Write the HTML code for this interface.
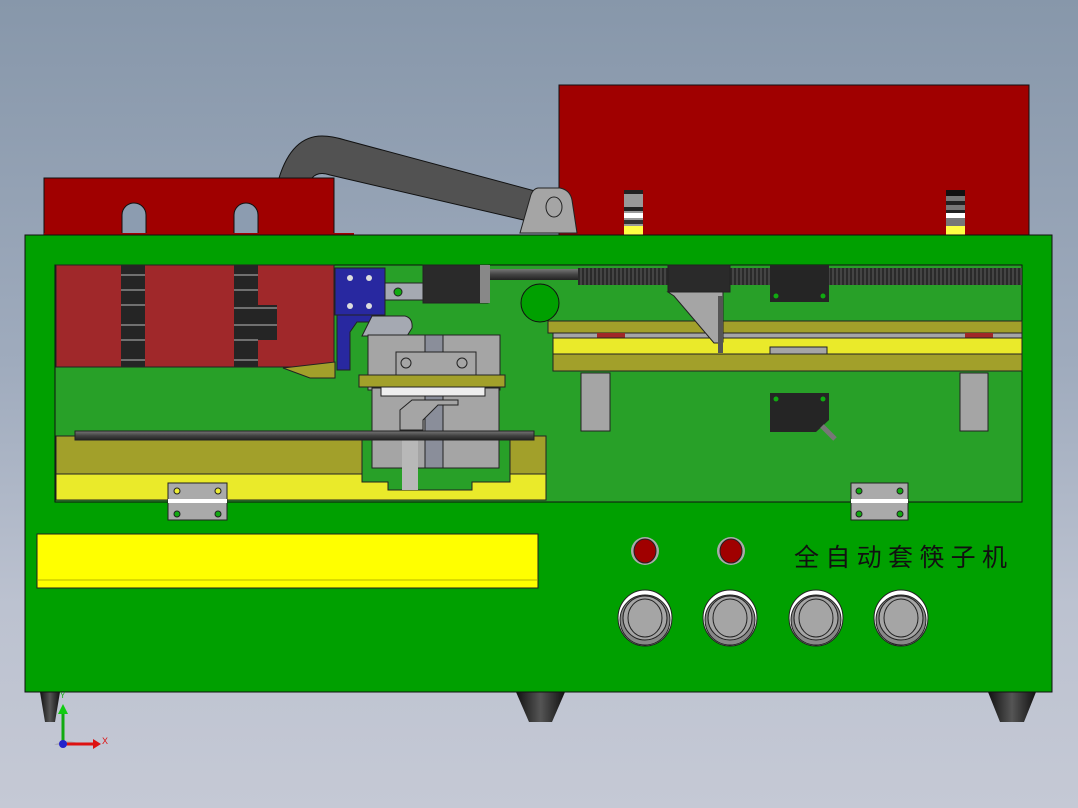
<!DOCTYPE html>
<html><head><meta charset="utf-8"><style>
html,body{margin:0;padding:0;width:1078px;height:808px;overflow:hidden}
body{background:linear-gradient(#8797aa,#9fabbd 45%,#bcc2d0 75%,#c5c9d5)}
svg{display:block}
</style></head><body>
<svg width="1078" height="808" viewBox="0 0 1078 808" xmlns="http://www.w3.org/2000/svg">
<defs>
<linearGradient id="ft" x1="0" x2="1"><stop offset="0" stop-color="#111"/><stop offset=".5" stop-color="#555"/><stop offset="1" stop-color="#111"/></linearGradient>
<linearGradient id="rod" x1="0" y1="0" x2="0" y2="1"><stop offset="0" stop-color="#777"/><stop offset=".5" stop-color="#444"/><stop offset="1" stop-color="#222"/></linearGradient>
<pattern id="thr" width="4" height="17" patternUnits="userSpaceOnUse"><rect width="4" height="17" fill="#2a2a2a"/><rect x="0" y="0" width="2" height="17" fill="#444"/></pattern>
</defs>
<rect x="559" y="85" width="470" height="152" fill="#a00000" stroke="#111" stroke-width="1"/>
<g>
<rect x="624" y="190" width="19" height="46" fill="#999"/>
<rect x="624" y="190" width="19" height="4" fill="#222"/><rect x="624" y="207" width="19" height="4" fill="#222"/><rect x="624" y="213" width="19" height="5" fill="#fff"/><rect x="624" y="220" width="19" height="4" fill="#333"/><rect x="624" y="226" width="19" height="10" fill="#ff4"/>
<rect x="946" y="190" width="19" height="46" fill="#777"/>
<rect x="946" y="190" width="19" height="6" fill="#111"/><rect x="946" y="201" width="19" height="4" fill="#222"/><rect x="946" y="210" width="19" height="4" fill="#222"/><rect x="946" y="213" width="19" height="5" fill="#fff"/><rect x="946" y="226" width="19" height="10" fill="#ff4"/>
</g>
<path d="M279,178 Q292,136 322,136 Q332,136 345,140 L550,195 L532,222 L330,175 Q318,171 312,178 Z" fill="#525252" stroke="#111" stroke-width="1"/>
<path d="M538,188 L560,188 Q570,190 572,200 L577,233 L520,233 L530,198 Q532,189 538,188 Z" fill="#a5a5a5" stroke="#222"/>
<ellipse cx="554" cy="207" rx="8" ry="10" fill="none" stroke="#222"/>
<rect x="44" y="178" width="290" height="58" fill="#a00000" stroke="#111"/>
<path d="M122,236 V215 A12,12 0 0 1 146,215 V236 Z M234,236 V215 A12,12 0 0 1 258,215 V236 Z" fill="#8c9cb0" stroke="#111"/>
<rect x="44" y="233" width="310" height="4" fill="#a00000"/>
<path d="M40,692 L60,692 L55,722 L45,722 Z" fill="url(#ft)"/>
<path d="M516,692 L565,692 L552,722 L529,722 Z" fill="url(#ft)"/>
<path d="M988,692 L1036,692 L1024,722 L1000,722 Z" fill="url(#ft)"/>
<rect x="25" y="235" width="1027" height="457" fill="#00a000" stroke="#111"/>
<rect x="55" y="265" width="967" height="237" fill="#28a028" stroke="#111"/>
<rect x="56" y="436" width="490" height="38" fill="#a2a02a" stroke="#222"/>
<rect x="56" y="474" width="490" height="26" fill="#eaea2a" stroke="#222"/>
<path d="M362,440 H510 V482 H472 V490 H388 V482 H362 Z" fill="#28a028" stroke="#222"/>
<rect x="56" y="265" width="278" height="102" fill="#a0282a" stroke="#222"/>
<rect x="121" y="265" width="24" height="102" fill="#252525"/>
<rect x="234" y="265" width="24" height="102" fill="#252525"/>
<rect x="234" y="305" width="43" height="35" fill="#252525"/>
<g stroke="#bbb" stroke-width="1">
<line x1="121" y1="275" x2="145" y2="275"/><line x1="121" y1="290" x2="145" y2="290"/><line x1="121" y1="305" x2="145" y2="305"/><line x1="121" y1="325" x2="145" y2="325"/><line x1="121" y1="340" x2="145" y2="340"/><line x1="121" y1="360" x2="145" y2="360"/>
<line x1="234" y1="275" x2="258" y2="275"/><line x1="234" y1="290" x2="258" y2="290"/><line x1="234" y1="308" x2="277" y2="308"/><line x1="234" y1="325" x2="277" y2="325"/><line x1="234" y1="340" x2="258" y2="340"/><line x1="234" y1="360" x2="258" y2="360"/>
</g>
<path d="M283,368 L335,362 L335,378 L310,378 Z" fill="#a2a02a" stroke="#222"/>
<rect x="335" y="268" width="50" height="47" fill="#2828a0" stroke="#222"/>
<path d="M335,315 H372 V322 H357 L350,332 L350,370 H337 V315 Z" fill="#2828a0" stroke="#222"/>
<circle cx="350" cy="278" r="3" fill="#ddd"/><circle cx="369" cy="278" r="3" fill="#ddd"/><circle cx="350" cy="306" r="3" fill="#ddd"/><circle cx="369" cy="306" r="3" fill="#ddd"/>
<rect x="385" y="283" width="40" height="17" fill="#a5a9b2" stroke="#222"/>
<circle cx="398" cy="292" r="4" fill="#1a1" stroke="#222"/>
<path d="M372,316 H405 Q413,318 412,328 L407,336 H362 Z" fill="#a5a9b2" stroke="#222"/>
<rect x="368" y="335" width="132" height="55" fill="#a5a5a5" stroke="#222"/>
<rect x="372" y="388" width="127" height="80" fill="#a5a5a5" stroke="#222"/>
<rect x="425" y="335" width="18" height="133" fill="#8a8e9a" stroke="#222"/>
<rect x="396" y="352" width="80" height="24" fill="#a5a5a5" stroke="#222"/>
<circle cx="406" cy="363" r="5" fill="none" stroke="#222"/><circle cx="462" cy="363" r="5" fill="none" stroke="#222"/>
<rect x="359" y="375" width="146" height="12" fill="#a2a02a" stroke="#222"/>
<rect x="381" y="387" width="104" height="9" fill="#eee" stroke="#222"/>
<path d="M400,410 L412,400 H458 V405 H438 L423,420 V430 H400 Z" fill="#a5a5a5" stroke="#222"/>
<rect x="402" y="440" width="16" height="50" fill="#b8b8b8"/>
<rect x="75" y="431" width="459" height="9" fill="url(#rod)" stroke="#222"/>
<rect x="423" y="265" width="65" height="38" fill="#2a2a2a" stroke="#222"/>
<rect x="480" y="265" width="10" height="38" fill="#888"/>
<rect x="490" y="269" width="90" height="11" fill="url(#rod)"/>
<rect x="578" y="268" width="444" height="17" fill="url(#thr)"/>
<circle cx="540" cy="303" r="19" fill="#00a000" stroke="#111"/>
<rect x="668" y="265" width="62" height="27" fill="#2a2a2a" stroke="#222"/>
<rect x="770" y="265" width="59" height="37" fill="#252525"/>
<circle cx="776" cy="296" r="2.5" fill="#1a1"/><circle cx="823" cy="296" r="2.5" fill="#1a1"/>
<rect x="548" y="321" width="474" height="12" fill="#a2a02a" stroke="#222"/>
<rect x="553" y="333" width="469" height="5" fill="#a5a5a5" stroke="#222"/>
<rect x="597" y="333" width="28" height="5" fill="#a02828"/><rect x="965" y="333" width="28" height="5" fill="#a02828"/>
<rect x="553" y="338" width="469" height="17" fill="#eaea2a" stroke="#222"/>
<rect x="770" y="347" width="57" height="8" fill="#a5a5a5" stroke="#222"/>
<rect x="553" y="354" width="469" height="17" fill="#a2a02a" stroke="#222"/>
<path d="M668,292 H723 V342 H721 V343 H714 L674,296 Z" fill="#a5a5a5" stroke="#222"/>
<rect x="718" y="296" width="5" height="57" fill="#555"/>
<rect x="581" y="373" width="29" height="58" fill="#a5a5a5" stroke="#222"/>
<rect x="960" y="373" width="28" height="58" fill="#a5a5a5" stroke="#222"/>
<path d="M770,393 H829 V420 L816,432 H770 Z" fill="#252525"/>
<line x1="822" y1="426" x2="835" y2="439" stroke="#777" stroke-width="5"/>
<circle cx="776" cy="399" r="2.5" fill="#1a1"/><circle cx="823" cy="399" r="2.5" fill="#1a1"/>
<g stroke="#222">
<rect x="168" y="483" width="59" height="37" fill="#aaa"/><rect x="168" y="499" width="59" height="4" fill="#fff" stroke="none"/>
<rect x="851" y="483" width="57" height="37" fill="#aaa"/><rect x="851" y="499" width="57" height="4" fill="#fff" stroke="none"/>
<circle cx="177" cy="491" r="3" fill="#ee3"/><circle cx="218" cy="491" r="3" fill="#ee3"/><circle cx="177" cy="514" r="3" fill="#1a1"/><circle cx="218" cy="514" r="3" fill="#1a1"/>
<circle cx="859" cy="491" r="3" fill="#1a1"/><circle cx="900" cy="491" r="3" fill="#1a1"/><circle cx="859" cy="514" r="3" fill="#1a1"/><circle cx="900" cy="514" r="3" fill="#1a1"/>
</g>
<rect x="37" y="534" width="501" height="54" fill="#ffff00" stroke="#222"/>
<line x1="38" y1="580" x2="537" y2="580" stroke="#b8b800"/>
<ellipse cx="645" cy="551" rx="14" ry="14" fill="#aaa"/><ellipse cx="645" cy="551" rx="11" ry="12" fill="#a00000" stroke="#222"/>
<ellipse cx="731" cy="551" rx="14" ry="14" fill="#aaa"/><ellipse cx="731" cy="551" rx="11" ry="12" fill="#a00000" stroke="#222"/>
<g stroke="#222">
<g><ellipse cx="645" cy="618" rx="27" ry="28" fill="#fff"/><ellipse cx="645" cy="620" rx="25" ry="25" fill="#888"/><ellipse cx="645" cy="618" rx="22" ry="22" fill="#a5a5a5"/><ellipse cx="645" cy="618" rx="17" ry="19" fill="none"/></g>
<g><ellipse cx="730" cy="618" rx="27" ry="28" fill="#fff"/><ellipse cx="730" cy="620" rx="25" ry="25" fill="#888"/><ellipse cx="730" cy="618" rx="22" ry="22" fill="#a5a5a5"/><ellipse cx="730" cy="618" rx="17" ry="19" fill="none"/></g>
<g><ellipse cx="816" cy="618" rx="27" ry="28" fill="#fff"/><ellipse cx="816" cy="620" rx="25" ry="25" fill="#888"/><ellipse cx="816" cy="618" rx="22" ry="22" fill="#a5a5a5"/><ellipse cx="816" cy="618" rx="17" ry="19" fill="none"/></g>
<g><ellipse cx="901" cy="618" rx="27" ry="28" fill="#fff"/><ellipse cx="901" cy="620" rx="25" ry="25" fill="#888"/><ellipse cx="901" cy="618" rx="22" ry="22" fill="#a5a5a5"/><ellipse cx="901" cy="618" rx="17" ry="19" fill="none"/></g>
</g>
<text x="794" y="566" font-family="'Noto Sans CJK SC','WenQuanYi Zen Hei',sans-serif" font-size="25" fill="#111" letter-spacing="7" textLength="220">全自动套筷子机</text>
<path d="M54,745 A28,28 0 0 1 82,745 Z" fill="#999" opacity=".5"/>
<line x1="63" y1="745" x2="63" y2="712" stroke="#1a1" stroke-width="3"/><path d="M58,714 L63,704 L68,714 Z" fill="#1c1"/>
<line x1="63" y1="744" x2="95" y2="744" stroke="#d11" stroke-width="3"/><path d="M93,739 L101,744 L93,749 Z" fill="#d11"/>
<circle cx="63" cy="744" r="4" fill="#22c"/>
<text x="102" y="744" font-family="Liberation Sans,sans-serif" font-size="9" fill="#d11">X</text>
<text x="60" y="698" font-family="Liberation Sans,sans-serif" font-size="8" fill="#1a1">Y</text>
</svg>
</body></html>
